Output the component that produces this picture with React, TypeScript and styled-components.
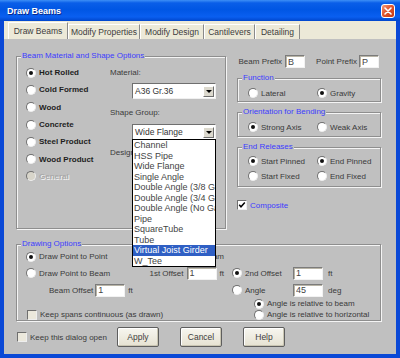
import styled, { createGlobalStyle } from 'styled-components';

const SANS = `'Liberation Sans', Arial, sans-serif`;
const PAGE = '#c0c0c0';
const FACE = '#ece9d8';
const INK = '#3a3a3a';
const BLUE_TEXT = '#3c3cff';

const GlobalStyle = createGlobalStyle`
  html, body {
    margin: 0;
    padding: 0;
    background: #ffffff;
  }
  * {
    box-sizing: border-box;
  }
`;

const Window = styled.div`
  width: 400px;
  height: 358px;
  display: flex;
  flex-direction: column;
  background: #0a48d6;
  font-family: ${SANS};
  font-size: 8px;
  color: ${INK};
  overflow: hidden;
`;

const TitleBar = styled.div`
  flex: 0 0 21px;
  display: flex;
  align-items: center;
  justify-content: space-between;
  padding: 0 5px 0 7px;
  background: linear-gradient(to bottom, #3d8ff6 0%, #0a5ee8 14%, #0056e4 45%, #0a5ff0 80%, #0046cc 100%);
`;

const Title = styled.span`
  color: #ffffff;
  font-weight: bold;
  font-size: 9px;
  text-shadow: 1px 1px 0 #0a2a8a;
`;

const CloseButton = styled.span`
  width: 14px;
  height: 14px;
  border: 1px solid #ffffff;
  border-radius: 3px;
  background: linear-gradient(135deg, #f29a7a 0%, #e2562e 45%, #c43812 100%);
  display: flex;
  align-items: center;
  justify-content: center;
`;

const Frame = styled.div`
  flex: 1;
  margin: 0 4px 4px;
  display: flex;
  flex-direction: column;
  background: ${PAGE};
`;

const TabStrip = styled.div`
  flex: 0 0 18px;
  display: flex;
  align-items: flex-end;
  padding-left: 4px;
  background: ${FACE};
`;

const Tab = styled.div<{ $active?: boolean; $w: number }>`
  width: ${(p) => p.$w}px;
  height: ${(p) => (p.$active ? 17 : 15)}px;
  display: flex;
  align-items: center;
  justify-content: center;
  font-size: 8.5px;
  color: #3c3c3c;
  white-space: nowrap;
  border-top: 1px solid #ffffff;
  border-left: 1px solid #ffffff;
  border-right: 1px solid #8a8a8a;
`;

const TabPage = styled.div`
  flex: 1;
  display: flex;
  flex-direction: column;
  padding: 12px 15px 0 12px;
`;

const TopSection = styled.div`
  display: grid;
  grid-template-columns: 210px 1fr;
  column-gap: 11px;
`;

const Group = styled.fieldset<{ $h?: number }>`
  margin: 0;
  padding: 0;
  min-width: 0;
  border: 1px solid #8e8e8e;
  box-shadow: 1px 1px 0 #f4f4f4, inset 1px 1px 0 #f4f4f4;
  ${(p) => (p.$h ? `height: ${p.$h}px;` : '')}
`;

const Legend = styled.legend`
  margin-left: 4px;
  padding: 0 1px;
  font-size: 8px;
  line-height: 10px;
  color: ${BLUE_TEXT};
  background: ${PAGE};
`;

const MaterialBody = styled.div`
  display: grid;
  grid-template-columns: 84px 1fr;
  padding-left: 9px;
`;

const RadioStack = styled.div`
  display: grid;
  grid-auto-rows: 17.3px;
  align-items: center;
  padding-top: 3px;
`;

const Option = styled.label<{ $indent?: number }>`
  display: flex;
  align-items: center;
  gap: 3px;
  height: 12px;
  padding-left: ${(p) => p.$indent || 0}px;
  white-space: nowrap;
`;

const RadioDot = styled.span<{ $on?: boolean; $off?: boolean }>`
  width: 10px;
  height: 10px;
  flex: 0 0 10px;
  border-radius: 50%;
  border: 1px solid;
  border-color: #6f6f6f #eeeeee #eeeeee #6f6f6f;
  background: ${(p) => (p.$off ? '#d8d5ca' : '#ffffff')};
  display: flex;
  align-items: center;
  justify-content: center;

  &::after {
    content: '';
    width: 4px;
    height: 4px;
    border-radius: 50%;
    background: #111111;
    display: ${(p) => (p.$on ? 'block' : 'none')};
  }
`;

const OptionText = styled.span<{ $bold?: boolean; $disabled?: boolean; $blue?: boolean }>`
  font-size: 8px;
  font-weight: ${(p) => (p.$bold ? 'bold' : 'normal')};
  color: ${(p) => (p.$disabled ? '#a9a9a9' : p.$blue ? BLUE_TEXT : p.$bold ? '#1e1e1e' : INK)};
  text-shadow: ${(p) => (p.$disabled ? '1px 1px 0 #f2f2f2' : 'none')};
`;

const ShapeColumn = styled.div`
  display: flex;
  flex-direction: column;
  padding-top: 6px;
`;

const FieldLabel = styled.span<{ $gap?: number }>`
  height: 12px;
  line-height: 12px;
  margin-top: ${(p) => p.$gap || 0}px;
  font-size: 8px;
  white-space: nowrap;
`;

const SelectBox = styled.div<{ $gap: number }>`
  position: relative;
  width: 84px;
  height: 16px;
  margin: ${(p) => p.$gap}px 0 0 22px;
  padding: 0 1px 0 2px;
  display: flex;
  align-items: center;
  justify-content: space-between;
  background: #ffffff;
  border: 1px solid;
  border-color: #6f6f6f #f0f0f0 #f0f0f0 #6f6f6f;
  font-size: 8.5px;
  color: #333333;
`;

const DropArrow = styled.span`
  width: 11px;
  height: 11px;
  display: flex;
  align-items: center;
  justify-content: center;
  background: #dcd9ce;
  border: 1px solid;
  border-color: #ffffff #6f6f6f #6f6f6f #ffffff;

  &::after {
    content: '';
    border-left: 3px solid transparent;
    border-right: 3px solid transparent;
    border-top: 3px solid #000000;
  }
`;

const DropList = styled.ul`
  position: absolute;
  top: 100%;
  left: -1px;
  width: 84px;
  margin: 0;
  padding: 0;
  list-style: none;
  background: #ffffff;
  border: 1px solid #000000;
  z-index: 5;
`;

const ListItem = styled.li<{ $selected?: boolean }>`
  height: 10.5px;
  line-height: 10.5px;
  padding-left: 1px;
  font-size: 9px;
  white-space: nowrap;
  overflow: hidden;
  color: ${(p) => (p.$selected ? '#ffffff' : '#444444')};
  background: ${(p) => (p.$selected ? '#2f5fc4' : 'transparent')};
`;

const SideColumn = styled.div`
  display: flex;
  flex-direction: column;
`;

const PrefixRow = styled.div`
  height: 13px;
  margin-top: 4px;
  padding-right: 2px;
  display: flex;
  align-items: center;
  justify-content: flex-end;
  gap: 11px;
`;

const InlineField = styled.div<{ $gap?: number; $indent?: number }>`
  display: flex;
  align-items: center;
  gap: ${(p) => p.$gap ?? 3}px;
  padding-left: ${(p) => p.$indent || 0}px;
  white-space: nowrap;
`;

const TextBox = styled.input<{ $w: number }>`
  width: ${(p) => p.$w}px;
  height: 13px;
  margin: 0;
  padding: 0 2px;
  border: 1px solid;
  border-color: #7b7b7b #f2f2f2 #f2f2f2 #7b7b7b;
  box-shadow: inset 1px 1px 0 #b8b4a6;
  background: #ffffff;
  font: 9px ${SANS};
  color: #444444;
  outline: none;
`;

const SideGroup = styled(Group)<{ $top: number }>`
  margin-top: ${(p) => p.$top}px;
`;

const TwoColumns = styled.div<{ $pad: string }>`
  display: grid;
  grid-template-columns: 69px 1fr;
  grid-auto-rows: 12px;
  row-gap: 3px;
  align-items: center;
  padding: ${(p) => p.$pad};
`;

const CheckRow = styled.label<{ $top?: number; $indent?: number; $w?: number }>`
  display: flex;
  align-items: center;
  gap: 3px;
  height: 12px;
  margin-top: ${(p) => p.$top || 0}px;
  padding-left: ${(p) => p.$indent || 0}px;
  ${(p) => (p.$w ? `width: ${p.$w}px; flex: 0 0 ${p.$w}px;` : '')}
  white-space: nowrap;
`;

const CheckSquare = styled.span<{ $checked?: boolean }>`
  width: 10px;
  height: 10px;
  flex: 0 0 10px;
  display: flex;
  align-items: center;
  justify-content: center;
  border: 1px solid;
  border-color: #6f6f6f #eeeeee #eeeeee #6f6f6f;
  background: ${(p) => (p.$checked ? '#ffffff' : '#ebe8dc')};
`;

const DrawingGroup = styled(Group)`
  margin-top: 10px;
`;

const DrawingGrid = styled.div`
  display: grid;
  grid-template-columns: 124px 82px 1fr;
  grid-template-rows: 15px 18px 16px 11px 11px;
  align-items: center;
  padding-left: 9px;
`;

const Cell = styled.div<{ $col: number; $row: number; $end?: boolean }>`
  grid-column: ${(p) => p.$col};
  grid-row: ${(p) => p.$row};
  display: flex;
  align-items: center;
  justify-content: ${(p) => (p.$end ? 'flex-end' : 'flex-start')};
  padding-right: ${(p) => (p.$end ? 8 : 0)}px;
  white-space: nowrap;
`;

const ModeOption = styled.div`
  display: grid;
  grid-template-columns: 56px 30px auto;
  column-gap: 5px;
  align-items: center;
`;

const Footer = styled.div`
  display: flex;
  align-items: center;
  height: 20px;
  margin-top: 6px;
`;

const ButtonGroup = styled.div`
  display: flex;
  gap: 21px;
`;

const DialogButton = styled.button`
  width: 42px;
  height: 20px;
  padding: 0;
  font: 8.5px ${SANS};
  color: #404040;
  background: linear-gradient(to bottom, #f7f6f0, #e6e2d2);
  border: 1px solid #5e5e5e;
  border-radius: 2px;
  box-shadow: inset -1px -1px 0 #c9c5b2, inset 1px 1px 0 #ffffff;
`;

const Radio = ({
  label,
  checked,
  disabled,
  bold,
  indent,
}: {
  label: string;
  checked?: boolean;
  disabled?: boolean;
  bold?: boolean;
  indent?: number;
}) => (
  <Option $indent={indent}>
    <RadioDot $on={checked} $off={disabled} />
    <OptionText $bold={bold} $disabled={disabled}>
      {label}
    </OptionText>
  </Option>
);

const CheckMark = () => (
  <svg width='8' height='8' viewBox='0 0 8 8'>
    <polyline points='1.2,3.8 3,5.8 6.8,1.6' fill='none' stroke='#000' strokeWidth='1.5' />
  </svg>
);

const CloseGlyph = () => (
  <svg width='8' height='8' viewBox='0 0 8 8'>
    <path d='M1 1 L7 7 M7 1 L1 7' stroke='#fff' strokeWidth='1.6' strokeLinecap='round' />
  </svg>
);

const tabs = [
  { label: 'Draw Beams', w: 60 },
  { label: 'Modify Properties', w: 72 },
  { label: 'Modify Design', w: 64 },
  { label: 'Cantilevers', w: 51 },
  { label: 'Detailing', w: 45 },
];

const materials = ['Hot Rolled', 'Cold Formed', 'Wood', 'Concrete', 'Steel Product', 'Wood Product'];

const shapes = [
  'Channel',
  'HSS Pipe',
  'Wide Flange',
  'Single Angle',
  'Double Angle (3/8 Gap)',
  'Double Angle (3/4 Gap)',
  'Double Angle (No Gap)',
  'Pipe',
  'SquareTube',
  'Tube',
  'Virtual Joist Girder',
  'W_Tee',
];

const App = () => {
  return (
    <>
      <GlobalStyle />
      <Window>
        <TitleBar>
          <Title>Draw Beams</Title>
          <CloseButton>
            <CloseGlyph />
          </CloseButton>
        </TitleBar>
        <Frame>
          <TabStrip>
            {tabs.map((t, i) => (
              <Tab key={t.label} $w={t.w} $active={i === 0}>
                {t.label}
              </Tab>
            ))}
          </TabStrip>
          <TabPage>
            <TopSection>
              <Group $h={178}>
                <Legend>Beam Material and Shape Options</Legend>
                <MaterialBody>
                  <RadioStack>
                    {materials.map((m, i) => (
                      <Radio key={m} label={m} bold checked={i === 0} />
                    ))}
                    <Radio label='General' bold disabled />
                  </RadioStack>
                  <ShapeColumn>
                    <FieldLabel>Material:</FieldLabel>
                    <SelectBox $gap={4}>
                      A36 Gr.36
                      <DropArrow />
                    </SelectBox>
                    <FieldLabel $gap={8}>Shape Group:</FieldLabel>
                    <SelectBox $gap={5}>
                      Wide Flange
                      <DropArrow />
                      <DropList>
                        {shapes.map((s) => (
                          <ListItem key={s} $selected={s === 'Virtual Joist Girder'}>
                            {s}
                          </ListItem>
                        ))}
                      </DropList>
                    </SelectBox>
                    <FieldLabel $gap={7}>Design Code:</FieldLabel>
                  </ShapeColumn>
                </MaterialBody>
              </Group>

              <SideColumn>
                <PrefixRow>
                  <InlineField>
                    Beam Prefix
                    <TextBox $w={20} readOnly value='B' />
                  </InlineField>
                  <InlineField $gap={2}>
                    Point Prefix
                    <TextBox $w={20} readOnly value='P' />
                  </InlineField>
                </PrefixRow>

                <SideGroup $top={5}>
                  <Legend>Function</Legend>
                  <TwoColumns $pad='4px 0 2px 10px'>
                    <Radio label='Lateral' />
                    <Radio label='Gravity' checked />
                  </TwoColumns>
                </SideGroup>

                <SideGroup $top={5}>
                  <Legend>Orientation for Bending</Legend>
                  <TwoColumns $pad='4px 0 3px 10px'>
                    <Radio label='Strong Axis' checked />
                    <Radio label='Weak Axis' />
                  </TwoColumns>
                </SideGroup>

                <SideGroup $top={5}>
                  <Legend>End Releases</Legend>
                  <TwoColumns $pad='3px 0 4px 10px'>
                    <Radio label='Start Pinned' checked />
                    <Radio label='End Pinned' checked />
                    <Radio label='Start Fixed' />
                    <Radio label='End Fixed' />
                  </TwoColumns>
                </SideGroup>

                <CheckRow $top={12}>
                  <CheckSquare $checked>
                    <CheckMark />
                  </CheckSquare>
                  <OptionText $blue>Composite</OptionText>
                </CheckRow>
              </SideColumn>
            </TopSection>

            <DrawingGroup>
              <Legend>Drawing Options</Legend>
              <DrawingGrid>
                <Cell $col={1} $row={1}>
                  <Radio label='Draw Point to Point' checked />
                </Cell>
                <Cell $col={2} $row={1} $end>
                  Offsets from Beam
                </Cell>
                <Cell $col={1} $row={2}>
                  <Radio label='Draw Point to Beam' />
                </Cell>
                <Cell $col={2} $row={2} $end>
                  <InlineField>
                    1st Offset
                    <TextBox $w={30} readOnly value='1' />
                    ft
                  </InlineField>
                </Cell>
                <Cell $col={1} $row={3}>
                  <InlineField $indent={23} $gap={2}>
                    Beam Offset
                    <TextBox $w={30} readOnly value='1' />
                    <span style={{ marginLeft: 1 }}>ft</span>
                  </InlineField>
                </Cell>
                <Cell $col={3} $row={2}>
                  <ModeOption>
                    <Radio label='2nd Offset' checked />
                    <TextBox $w={30} readOnly value='1' />
                    ft
                  </ModeOption>
                </Cell>
                <Cell $col={3} $row={3}>
                  <ModeOption>
                    <Radio label='Angle' />
                    <TextBox $w={30} readOnly value='45' />
                    deg
                  </ModeOption>
                </Cell>
                <Cell $col={3} $row={4}>
                  <Radio label='Angle is relative to beam' checked indent={22} />
                </Cell>
                <Cell $col={3} $row={5}>
                  <Radio label='Angle is relative to horizontal' indent={22} />
                </Cell>
                <Cell $col={1} $row={5}>
                  <CheckRow $indent={1}>
                    <CheckSquare />
                    <OptionText>Keep spans continuous (as drawn)</OptionText>
                  </CheckRow>
                </Cell>
              </DrawingGrid>
            </DrawingGroup>

            <Footer>
              <CheckRow $indent={1} $w={101}>
                <CheckSquare />
                <OptionText>Keep this dialog open</OptionText>
              </CheckRow>
              <ButtonGroup>
                <DialogButton type='button'>Apply</DialogButton>
                <DialogButton type='button'>Cancel</DialogButton>
                <DialogButton type='button'>Help</DialogButton>
              </ButtonGroup>
            </Footer>
          </TabPage>
        </Frame>
      </Window>
    </>
  );
};

export default App;
